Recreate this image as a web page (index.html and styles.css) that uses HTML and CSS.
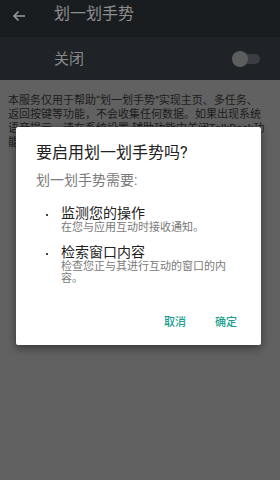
FILE: index.html
```html
<!DOCTYPE html>
<html lang="zh-CN">
<head>
<meta charset="utf-8">
<link rel="stylesheet" href="styles.css">
</head>
<body>
<div class="screen">
  <header class="topbar">
    <svg class="back" width="14" height="12" viewBox="0 0 14 12"><path d="M13 6H2M6.5 1.5L2 6l4.5 4.5" fill="none" stroke="#9a9a9a" stroke-width="1.5"/></svg>
    <span class="title">划一划手势</span>
  </header>
  <div class="switchrow">
    <span class="switchlabel">关闭</span>
    <span class="toggle"><span class="track"></span><span class="thumb"></span></span>
  </div>
  <p class="desc">本服务仅用于帮助“划一划手势”实现主页、多任务、返回按键等功能，不会收集任何数据。如果出现系统语音提示，请在系统设置-辅助功能中关闭TalkBack功能。</p>
</div>
<div class="dialog">
  <h1 class="dtitle">要启用划一划手势吗?</h1>
  <p class="dsub">划一划手势需要:</p>
  <ul class="perms">
    <li class="perm">
      <span class="phead">监测您的操作</span>
      <span class="pdesc">在您与应用互动时接收通知。</span>
    </li>
    <li class="perm">
      <span class="phead">检索窗口内容</span>
      <span class="pdesc">检查您正与其进行互动的窗口的内容。</span>
    </li>
  </ul>
  <div class="actions">
    <span class="btn">取消</span>
    <span class="btn">确定</span>
  </div>
</div>
</body>
</html>
```
FILE: styles.css
```css
html, body {
  margin: 0;
  padding: 0;
}
body {
  width: 280px;
  height: 480px;
  background: #616161;
  font-family: Roboto, "Noto Sans CJK SC", sans-serif;
  position: relative;
  overflow: hidden;
}
.screen {
  display: flex;
  flex-direction: column;
}
.topbar {
  height: 37px;
  background: #1a1d20;
  display: flex;
  align-items: flex-start;
  padding-top: 4px;
  box-sizing: border-box;
}
.back {
  margin: 6px 0 0 12px;
}
.title {
  margin-left: 28px;
  font-size: 16px;
  line-height: 20px;
  color: #8e8e8e;
}
.switchrow {
  height: 43px;
  background: #1f2226;
  display: flex;
  align-items: center;
  padding: 0 20px 0 54px;
  box-sizing: border-box;
  justify-content: space-between;
}
.switchlabel {
  font-size: 15px;
  line-height: 20px;
  color: #8a8a8a;
}
.toggle {
  position: relative;
  width: 28px;
  height: 16px;
  display: block;
}
.track {
  position: absolute;
  left: 10px;
  top: 3px;
  width: 18px;
  height: 10px;
  border-radius: 5px;
  background: #3a3d41;
}
.thumb {
  position: absolute;
  left: 0;
  top: 0;
  width: 16px;
  height: 16px;
  border-radius: 50%;
  background: #5c5d5f;
}
.desc {
  margin: 0;
  padding: 14px 12px 0 8px;
  font-size: 11px;
  line-height: 14px;
  color: #1c1c1c;
}
.dialog {
  position: absolute;
  left: 16px;
  top: 127px;
  width: 245px;
  height: 218px;
  box-sizing: border-box;
  background: #ffffff;
  border-radius: 2px;
  box-shadow: 0 3px 8px rgba(0,0,0,0.45);
  padding: 16px 20px 0 20px;
  display: flex;
  flex-direction: column;
}
.dtitle {
  margin: 0;
  font-size: 16px;
  line-height: 20px;
  font-weight: normal;
  color: #212121;
}
.dsub {
  margin: 8px 0 0 0;
  font-size: 14px;
  line-height: 18px;
  color: #7a7a7a;
}
.perms {
  list-style: none;
  margin: 16px 0 0 0;
  padding: 0;
  display: flex;
  flex-direction: column;
  gap: 9px;
}
.perm {
  position: relative;
  padding-left: 25px;
  display: flex;
  flex-direction: column;
}
.perm::before {
  content: "";
  position: absolute;
  left: 10px;
  top: 9px;
  width: 2px;
  height: 2px;
  background: #444;
}
.phead {
  font-size: 14px;
  line-height: 17px;
  color: #222;
}
.pdesc {
  font-size: 11px;
  line-height: 12.5px;
  color: #7a7a7a;
  padding-right: 10px;
}
.actions {
  margin-top: auto;
  height: 29px;
  display: flex;
  justify-content: flex-end;
  align-items: flex-start;
  gap: 29px;
  padding-right: 4px;
}
.btn {
  font-size: 11px;
  line-height: 14px;
  color: #1a9e8f;
  font-weight: 500;
}
```
